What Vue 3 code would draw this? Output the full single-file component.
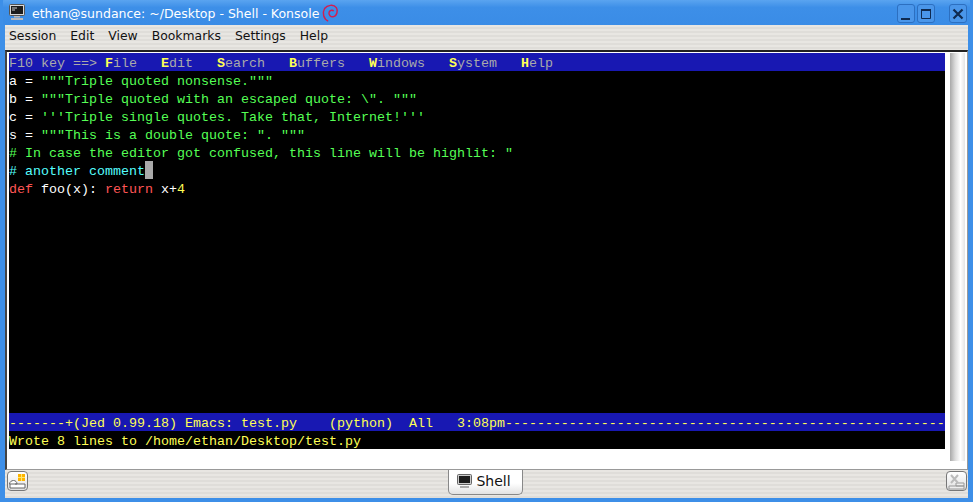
<script setup>
const menu = ['Session', 'Edit', 'View', 'Bookmarks', 'Settings', 'Help']
const jedMenu = [
  ['F', 'ile', '   '], ['E', 'dit', '   '], ['S', 'earch', '   '], ['B', 'uffers', '   '],
  ['W', 'indows', '   '], ['S', 'ystem', '   '], ['H', 'elp', '']
]
const status = '-------+(Jed 0.99.18) Emacs: test.py    (python)  All   3:08pm' + '-'.repeat(55)
</script>

<template>
  <div class="window">
    <header class="titlebar">
      <svg class="app-icon" width="18" height="18" viewBox="0 0 18 18">
        <rect x="1.5" y="0.5" width="15" height="11" rx="1" fill="#d8d8d8" stroke="#555" />
        <rect x="3" y="2" width="12" height="8" fill="#1c1c1c" />
        <path d="M4 4h5M4 6h3" stroke="#ccc" stroke-width="1" />
        <path d="M6 12h6v1.5H6zM3 14h12v2H3z" fill="#bbb" />
      </svg>
      <span class="title">ethan@sundance: ~/Desktop - Shell - Konsole</span>
      <svg class="swirl" width="18" height="20" viewBox="0 0 20 20">
        <path d="M8 19C3 17 1 10 4 5c3-4 10-5 13-1 2 3 1 9-3 10-3 1-6-2-5-5 1-2 4-3 5-1" fill="none" stroke="#d21e50" stroke-width="1.6" />
      </svg>
      <div class="spacer"></div>
      <div class="win-btn">
        <svg width="16" height="16" viewBox="0 0 16 16"><path d="M3 12h9v2H3z" fill="#0f2a50" /></svg>
      </div>
      <div class="win-btn second">
        <svg width="16" height="16" viewBox="0 0 16 16"><path d="M3.5 4.5h9v8h-9z" fill="none" stroke="#0f2a50" /><path d="M3 3h10v2H3z" fill="#0f2a50" /></svg>
      </div>
      <div class="win-btn third">
        <svg width="16" height="16" viewBox="0 0 16 16"><path d="M3.5 3.5l9 9M12.5 3.5l-9 9" stroke="#0f2a50" stroke-width="2.2" /></svg>
      </div>
    </header>

    <nav class="menubar">
      <span v-for="m in menu" :key="m" class="menu-item">{{ m }}</span>
    </nav>

    <main class="frame">
      <div class="terminal">
        <div class="row bar gray">F10 key ==&gt; <template v-for="(m, i) in jedMenu" :key="i"><b class="yellow">{{ m[0] }}</b>{{ m[1] }}{{ m[2] }}</template></div>
        <div class="screen">
          <div class="row"><span class="white">a = </span><span class="green">"""Triple quoted nonsense."""</span></div>
          <div class="row"><span class="white">b = </span><span class="green">"""Triple quoted with an escaped quote: \". """</span></div>
          <div class="row"><span class="white">c = </span><span class="green">'''Triple single quotes. Take that, Internet!'''</span></div>
          <div class="row"><span class="white">s = </span><span class="green">"""This is a double quote: ". """</span></div>
          <div class="row green"># In case the editor got confused, this line will be highlit: "</div>
          <div class="row cyan"># another comment<span class="cursor"></span></div>
          <div class="row"><span class="red">def</span><span class="white"> foo(x): </span><span class="red">return</span><span class="white"> x+</span><span class="yellow">4</span></div>
        </div>
        <div class="row bar yellow">{{ status }}</div>
        <div class="row message yellow">Wrote 8 lines to /home/ethan/Desktop/test.py</div>
      </div>
      <div class="scrollbar"></div>
    </main>

    <footer class="taskbar">
      <div class="corner-btn">
        <svg width="19" height="17" viewBox="0 0 19 17">
          <path d="M1.5 11c0-2 2-3.500 4-3.500s3.500 1.500 3.500 3.500zM7 11h10v4H2v-4" fill="#fff" stroke="#666" />
          <path d="M10 1h7v7h-7z" fill="#ffb400" />
          <path d="M10 4.500h7M13.500 1v7" stroke="#ffe870" />
        </svg>
      </div>
      <div class="spacer"></div>
      <div class="tab">
        <svg width="17" height="17" viewBox="0 0 17 17">
          <rect x="1.5" y="1.5" width="14" height="10" rx="1" fill="#ccc" stroke="#666" />
          <rect x="3" y="3" width="11" height="7" fill="#1c1c1c" />
          <path d="M4 13h9v2H4z" fill="#aaa" />
        </svg>
        <span>Shell</span>
      </div>
      <div class="spacer"></div>
      <div class="corner-btn faded">
        <svg width="19" height="17" viewBox="0 0 19 17">
          <path d="M9 10h8v3H9zM2 13h15v3H2z" fill="#eee" stroke="#999" />
          <path d="M4 2l7 8M11 2l-7 8" stroke="#bbb" stroke-width="2" />
        </svg>
      </div>
    </footer>
  </div>
</template>

<style scoped>
.window {
  width: 973px;
  height: 502px;
  box-sizing: border-box;
  background: #3d8fe8;
  border-radius: 5px 5px 0 0;
  display: flex;
  flex-direction: column;
  overflow: hidden;
  padding: 0 5px 4px 5px;
  font-family: "DejaVu Sans", sans-serif;
}
.titlebar {
  height: 25px;
  flex: none;
  display: flex;
  align-items: center;
  color: #fff;
  margin: 0 -2px 0 -2px;
  background: linear-gradient(#5aa4f0, #3d8fe8 30%, #3a8ce6);
  font-size: 12.5px;
}
.app-icon { margin: 0 0 0 5px; }
.title { margin-left: 6px; padding-top: 2px; white-space: nowrap; }
.swirl { margin: 0 0 0 2px; }
.spacer { flex: 1; }
.win-btn {
  width: 18px;
  height: 19px;
  margin-top: 2px;
  box-sizing: border-box;
  border: 1px solid #2c6fc0;
  border-radius: 3px;
  background: #4a96ea;
  display: flex;
  align-items: center;
  justify-content: center;
}
.win-btn.second { margin-left: 2px; }
.win-btn.third { margin: 2px 3px 0 14px; }
.menubar {
  height: 25px;
  flex: none;
  display: flex;
  align-items: center;
  padding-bottom: 4px;
  box-sizing: border-box;
  font-size: 12.4px;
  color: #111;
  background: repeating-linear-gradient(#e8e6e2 0 2px, #dfddd9 2px 4px);
}
.menu-item { margin-left: 4px; padding-right: 10px; white-space: nowrap; }
.frame {
  height: 420px;
  flex: none;
  box-sizing: border-box;
  display: flex;
  align-items: flex-start;
  background: #fff;
  border: 1px solid #999;
  border-top: 2px solid #222;
  border-left: 2px solid #444;
  padding: 1px 2px 8px 2px;
}
.terminal {
  width: 936px;
  height: 396px;
  flex: none;
  display: flex;
  flex-direction: column;
  background: #000;
  font: 13.33px/22px "Liberation Mono", monospace;
  color: #aaa;
  white-space: pre;
}
.row { height: 18px; overflow: hidden; }
.screen { flex: 1; }
.bar { background: #1818b2; }
.gray { color: #aaa; }
.white { color: #fff; }
.green { color: #55ff55; }
.cyan { color: #55ffff; }
.red { color: #ff5555; }
.yellow { color: #ffff55; }
.cursor {
  display: inline-block;
  width: 8px;
  height: 18px;
  background: #aaa;
  vertical-align: top;
}
.scrollbar {
  width: 15px;
  height: 408px;
  margin: 0 0 0 5px;
  flex: none;
  background: linear-gradient(90deg, #a8a8a8, #dcdcdc 35%, #fff 70%, #e4e4e4);
}
.taskbar {
  flex: 1;
  display: flex;
  align-items: flex-start;
  background: repeating-linear-gradient(#e8e6e2 0 2px, #dfddd9 2px 4px);
  padding: 1px 1px 0 2px;
}
.corner-btn {
  width: 21px;
  height: 20px;
  box-sizing: border-box;
  border: 1px solid #777;
  border-radius: 4px;
  background: linear-gradient(#fff, #e0e0e0);
  display: flex;
  align-items: center;
  justify-content: center;
  overflow: hidden;
}
.tab {
  width: 75px;
  height: 25px;
  margin: -1px 4px 0 0;
  padding: 0 3px 2px 0;
  box-sizing: border-box;
  border: 1px solid #888;
  border-top: none;
  border-radius: 0 0 5px 5px;
  background: linear-gradient(#fff 55%, #e2e2e2);
  display: flex;
  align-items: center;
  justify-content: center;
  gap: 3px;
  font-size: 14px;
  color: #111;
}
</style>

<style>
html, body { margin: 0; background: #3d8fe8; overflow: hidden; }
</style>
